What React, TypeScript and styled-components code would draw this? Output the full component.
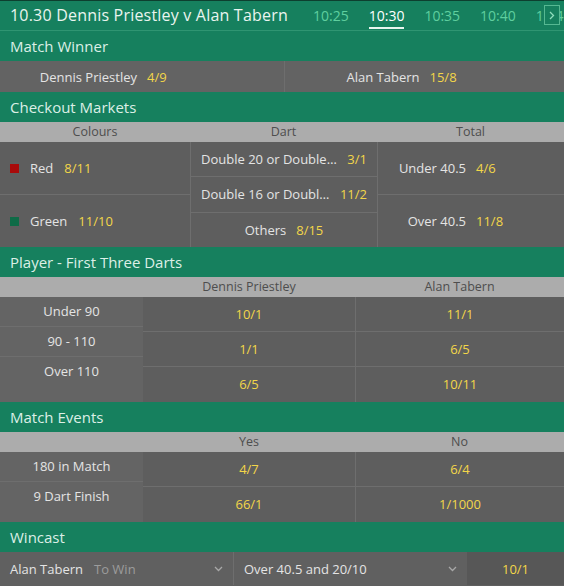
import React from 'react';
import styled, { createGlobalStyle } from 'styled-components';

const GREEN = '#16805e';
const ODDS = '#f3d649';
const TEXT = '#e4e4e4';
const LINE = '#6e6e6e';

const GlobalStyle = createGlobalStyle`
  html, body {
    margin: 0;
    padding: 0;
    background: #5f5f5f;
  }
  body {
    font-family: 'Open Sans', 'Noto Sans', sans-serif;
  }
  * {
    box-sizing: border-box;
  }
`;

const Page = styled.div`
  width: 564px;
  height: 586px;
  overflow: hidden;
  background: #5f5f5f;
`;

const TopBar = styled.div`
  display: flex;
  justify-content: space-between;
  height: 31px;
  background: ${GREEN};
  border-top: 1px solid #0d3f2f;
  border-bottom: 1px solid #2f9572;
`;

const Title = styled.div`
  padding-left: 10px;
  font-size: 16px;
  letter-spacing: 0.2px;
  line-height: 29px;
  color: #eaf4ef;
  white-space: nowrap;
`;

const Tabs = styled.div`
  position: relative;
  display: flex;
  gap: 20px;
  width: 251px;
  overflow: hidden;
`;

const Tab = styled.div<{ $active?: boolean }>`
  position: relative;
  flex: none;
  font-size: 14px;
  line-height: 29px;
  color: ${(p) => (p.$active ? '#ffffff' : '#5fcf9f')};

  &::after {
    content: '';
    display: ${(p) => (p.$active ? 'block' : 'none')};
    position: absolute;
    left: 0;
    right: 0;
    bottom: 1px;
    height: 2px;
    background: #e8f5ef;
  }
`;

const NextButton = styled.div`
  position: absolute;
  right: 4px;
  top: 4px;
  width: 16px;
  height: 20px;
  display: flex;
  align-items: center;
  justify-content: center;
  background: ${GREEN};
  border: 1px solid #56b892;
`;

const SectionTitle = styled.div`
  height: 30px;
  padding: 0 10px;
  background: ${GREEN};
  font-size: 15px;
  line-height: 30px;
  color: #dcefe6;
`;

const ColHead = styled.div<{ $cols: string }>`
  display: grid;
  grid-template-columns: ${(p) => p.$cols};
  height: 20px;
  background: #acacac;
  font-size: 12.5px;
  line-height: 20px;
  color: #4e4e4e;
  text-align: center;
`;

const Grid = styled.div<{ $cols: string; $h: number; $bg?: string }>`
  display: grid;
  grid-template-columns: ${(p) => p.$cols};
  height: ${(p) => p.$h}px;
  background: ${(p) => p.$bg || '#5e5e5e'};
`;

const Column = styled.div<{ $shade?: string; $sep?: boolean }>`
  display: flex;
  flex-direction: column;
  min-width: 0;
  background: ${(p) => p.$shade || 'transparent'};
  border-left: ${(p) => (p.$sep ? `1px solid ${LINE}` : 'none')};
`;

const Pair = styled.div<{ $sep?: boolean }>`
  flex: 1;
  display: flex;
  align-items: center;
  gap: 10px;
  font-size: 13px;
  color: ${TEXT};
  border-top: ${(p) => (p.$sep ? `1px solid ${LINE}` : 'none')};
  white-space: nowrap;
`;

const PairName = styled.span`
  flex: 1;
  text-align: right;
`;

const PairOdds = styled.span`
  flex: 1;
  color: ${ODDS};
`;

const ColourRow = styled.div<{ $sep?: boolean }>`
  flex: 1;
  display: flex;
  align-items: center;
  gap: 11px;
  padding-left: 10px;
  font-size: 13px;
  color: ${TEXT};
  border-top: ${(p) => (p.$sep ? `1px solid ${LINE}` : 'none')};
`;

const Swatch = styled.span<{ $color: string }>`
  width: 9px;
  height: 9px;
  background: ${(p) => p.$color};
`;

const Odds = styled.span`
  flex: none;
  color: ${ODDS};
`;

const DartRow = styled.div<{ $sep?: boolean }>`
  flex: 1;
  display: flex;
  align-items: center;
  justify-content: center;
  gap: 10px;
  padding: 0 10px;
  font-size: 13px;
  color: ${TEXT};
  white-space: nowrap;
  border-top: ${(p) => (p.$sep ? `1px solid ${LINE}` : 'none')};
`;

const DartName = styled.span`
  min-width: 0;
  overflow: hidden;
  text-overflow: ellipsis;
`;

const Label = styled.div<{ $last?: boolean }>`
  flex: ${(p) => (p.$last ? '1' : 'none')};
  height: ${(p) => (p.$last ? 'auto' : '30px')};
  border-bottom: ${(p) => (p.$last ? 'none' : `1px solid ${LINE}`)};
  font-size: 13px;
  line-height: 29px;
  color: ${TEXT};
  text-align: center;
`;

const OddsCell = styled.div<{ $last?: boolean }>`
  height: 35px;
  border-bottom: ${(p) => (p.$last ? 'none' : `1px solid ${LINE}`)};
  font-size: 13px;
  line-height: 34px;
  color: ${ODDS};
  text-align: center;
`;

const WinRow = styled.div`
  display: grid;
  grid-template-columns: 233px 234px 1fr;
  height: 33px;
  background: #606060;
`;

const Select = styled.div<{ $sep?: boolean }>`
  display: flex;
  align-items: center;
  gap: 11px;
  padding: 0 10px;
  font-size: 13px;
  color: ${TEXT};
  border-left: ${(p) => (p.$sep ? `1px solid ${LINE}` : 'none')};
  white-space: nowrap;

  svg {
    margin-left: auto;
  }
`;

const Muted = styled.span`
  color: #9c9c9c;
`;

const WinOdds = styled.div`
  display: flex;
  align-items: center;
  justify-content: center;
  background: #575757;
  font-size: 13px;
  color: ${ODDS};
`;

const Chevron = () => (
  <svg width="9" height="6" viewBox="0 0 9 6">
    <polyline points="1,1 4.5,4.5 8,1" fill="none" stroke="#a8a8a8" strokeWidth="1.3" />
  </svg>
);

type Line = { label: string; a: string; b: string };

const player: Line[] = [
  { label: 'Under 90', a: '10/1', b: '11/1' },
  { label: '90 - 110', a: '1/1', b: '6/5' },
  { label: 'Over 110', a: '6/5', b: '10/11' },
];

const events: Line[] = [
  { label: '180 in Match', a: '4/7', b: '6/4' },
  { label: '9 Dart Finish', a: '66/1', b: '1/1000' },
];

const BodyTable: React.FC<{ rows: Line[]; h: number }> = ({ rows, h }) => (
  <Grid $cols="143px 212px 1fr" $h={h}>
    <Column $shade="#646464">
      {rows.map((r, i) => (
        <Label key={r.label} $last={i === rows.length - 1}>
          {r.label}
        </Label>
      ))}
    </Column>
    <Column>
      {rows.map((r, i) => (
        <OddsCell key={r.label} $last={i === rows.length - 1}>
          {r.a}
        </OddsCell>
      ))}
    </Column>
    <Column $sep>
      {rows.map((r, i) => (
        <OddsCell key={r.label} $last={i === rows.length - 1}>
          {r.b}
        </OddsCell>
      ))}
    </Column>
  </Grid>
);

export default function App() {
  return (
    <Page>
      <GlobalStyle />
      <TopBar>
        <Title>10.30 Dennis Priestley v Alan Tabern</Title>
        <Tabs>
          <Tab>10:25</Tab>
          <Tab $active>10:30</Tab>
          <Tab>10:35</Tab>
          <Tab>10:40</Tab>
          <Tab>10:45</Tab>
          <NextButton>
            <svg width="6" height="9" viewBox="0 0 6 9">
              <polyline points="1,1 4.5,4.5 1,8" fill="none" stroke="#8fdcbc" strokeWidth="1.3" />
            </svg>
          </NextButton>
        </Tabs>
      </TopBar>

      <SectionTitle>Match Winner</SectionTitle>
      <Grid $cols="284px 1fr" $h={31} $bg="#636363">
        <Pair>
          <PairName>Dennis Priestley</PairName>
          <PairOdds>4/9</PairOdds>
        </Pair>
        <Column $sep>
          <Pair>
            <PairName>Alan Tabern</PairName>
            <PairOdds>15/8</PairOdds>
          </Pair>
        </Column>
      </Grid>

      <SectionTitle>Checkout Markets</SectionTitle>
      <ColHead $cols="190px 187px 1fr">
        <span>Colours</span>
        <span>Dart</span>
        <span>Total</span>
      </ColHead>
      <Grid $cols="190px 187px 1fr" $h={105}>
        <Column>
          <ColourRow>
            <Swatch $color="#a80a0a" />
            <span>Red</span>
            <Odds>8/11</Odds>
          </ColourRow>
          <ColourRow $sep>
            <Swatch $color="#0f6b47" />
            <span>Green</span>
            <Odds>11/10</Odds>
          </ColourRow>
        </Column>
        <Column $sep>
          <DartRow>
            <DartName>Double 20 or Double 10 or Double 5</DartName>
            <Odds>3/1</Odds>
          </DartRow>
          <DartRow $sep>
            <DartName>Double 16 or Double 8 or Double 4</DartName>
            <Odds>11/2</Odds>
          </DartRow>
          <DartRow $sep>
            <DartName>Others</DartName>
            <Odds>8/15</Odds>
          </DartRow>
        </Column>
        <Column $sep>
          <Pair>
            <PairName>Under 40.5</PairName>
            <PairOdds>4/6</PairOdds>
          </Pair>
          <Pair $sep>
            <PairName>Over 40.5</PairName>
            <PairOdds>11/8</PairOdds>
          </Pair>
        </Column>
      </Grid>

      <SectionTitle>Player - First Three Darts</SectionTitle>
      <ColHead $cols="143px 212px 1fr">
        <span />
        <span>Dennis Priestley</span>
        <span>Alan Tabern</span>
      </ColHead>
      <BodyTable rows={player} h={105} />

      <SectionTitle>Match Events</SectionTitle>
      <ColHead $cols="143px 212px 1fr">
        <span />
        <span>Yes</span>
        <span>No</span>
      </ColHead>
      <BodyTable rows={events} h={70} />

      <SectionTitle>Wincast</SectionTitle>
      <WinRow>
        <Select>
          <span>Alan Tabern</span>
          <Muted>To Win</Muted>
          <Chevron />
        </Select>
        <Select $sep>
          <span>Over 40.5 and 20/10</span>
          <Chevron />
        </Select>
        <WinOdds>10/1</WinOdds>
      </WinRow>
    </Page>
  );
}
